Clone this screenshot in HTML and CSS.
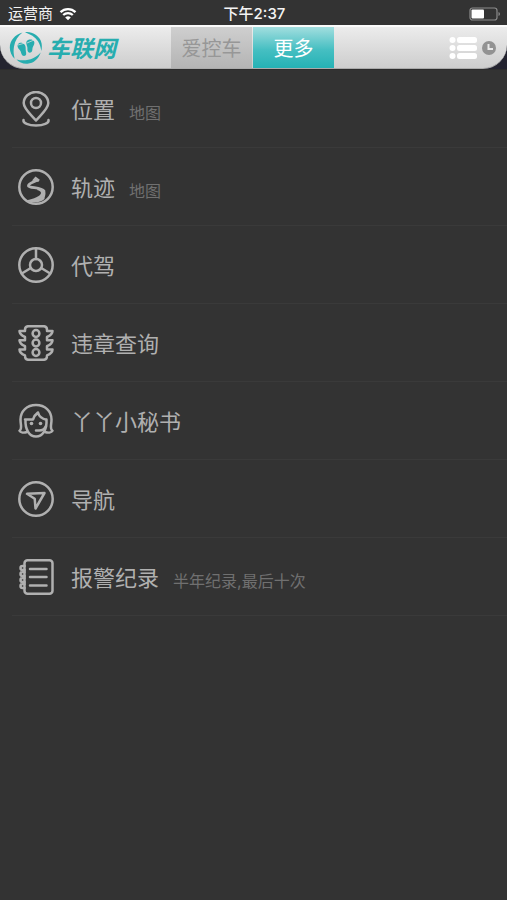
FILE: index.html
```html
<!DOCTYPE html>
<html lang="zh-CN">
<head>
<meta charset="utf-8">
<meta name="viewport" content="width=device-width, initial-scale=1">
<title>车联网</title>
<link rel="stylesheet" href="styles.css">
</head>
<body>
<div class="status">
  <div class="carrier">
    <span>运营商</span>
    <svg width="18" height="14" viewBox="0 0 18 14" aria-hidden="true">
      <path d="M1.500 5.200a10.800 10.800 0 0 1 15 0M4.200 8a7 7 0 0 1 9.600 0" fill="none" stroke="#fff" stroke-width="2.300"/>
      <path d="M9 13.300 6.200 10.500a4 4 0 0 1 5.600 0z" fill="#fff"/>
    </svg>
  </div>
  <time class="clock">下午2:37</time>
  <svg class="battery" width="32" height="14" viewBox="0 0 32 14" aria-hidden="true">
    <rect x="1" y="1" width="27" height="12" rx="2.500" fill="none" stroke="#8b8b8b" stroke-width="1.200"/>
    <path d="M29.500 5v4q1.500-.5 1.500-2t-1.500-2z" fill="#8b8b8b"/>
    <rect x="2.500" y="2.500" width="12.500" height="9" rx="1" fill="#fff"/>
  </svg>
</div>

<div class="header-wrap">
<header class="header">
  <a class="brand" href="#">
    <svg width="34" height="34" viewBox="0 0 34 34" aria-hidden="true">
      <g fill="#27adaf">
        <path d="M13.500 1.500C6 3.500.8 9.500.8 16.500c0 4.500 2 8.500 4.800 11.200C4.500 23 4.300 19.500 5 15.500 6 9.500 9 5 13.500 1.500z"/>
        <path d="M16 1.200c7-.9 13 2.800 15.800 8.600 1.500 3.600 1.200 7.500.5 10.200-.6-4-1.500-7-3.300-9.800C26 5.600 21.500 3.300 16 1.200z"/>
        <path d="M31.700 21.500c-2.200 6.500-7 10.700-13.200 11.200-4.500.3-8.500-1.300-11-4.200 6 1.500 11.500 1 16.500-1.300 3.200-1.500 5.500-3.400 7.700-5.700z"/>
        <path d="M9 13.200c1.500-2 4.600-1.800 6.500.3 1.300 1.500 1.200 3.300 1.200 5.200 0 1.900 1.200 4.200 0 5.600-1.300 1.400-3.600.8-4.200-1.200-.5-1.800-.7-3-2-4.400-1.600-1.600-2.700-3.600-1.500-5.500z"/>
        <path d="M18 9.800c2-2.100 5.800-1.800 7 .4.900 1.800.1 3.600-.9 5.200-1 1.700-.5 3.200-1 4.700-.7 1.800-3 2.200-4.100.7-1-1.400-.3-3-.7-4.700-.4-1.900-1.800-4.600-.3-6.300z"/>
      </g>
      <path d="m9 14 7-2M18 12l7-3" fill="none" stroke="#e4e4e4" stroke-width=".7"/>
    </svg>
    <span class="brand-name">车联网</span>
  </a>
  <nav class="tabs">
    <button type="button" class="tab">爱控车</button>
    <button type="button" class="tab tab-active">更多</button>
  </nav>
  <div class="tools">
    <button type="button" class="tool" aria-label="列表">
      <svg width="28" height="24" viewBox="0 0 28 24" fill="#fff">
        <circle cx="3.500" cy="4" r="3"/><circle cx="3.500" cy="12" r="3"/><circle cx="3.500" cy="20" r="3"/>
        <rect x="8" y="1" width="20" height="6" rx="2.500"/><rect x="8" y="9" width="20" height="6" rx="2.500"/><rect x="8" y="17" width="20" height="6" rx="2.500"/>
      </svg>
    </button>
    <button type="button" class="tool" aria-label="时间">
      <svg width="14" height="14" viewBox="0 0 14 14">
        <circle cx="7" cy="7" r="7" fill="#929292"/>
        <path d="M6.500 3v5H11" fill="none" stroke="#e8e8e8" stroke-width="2"/>
      </svg>
    </button>
  </div>
</header>
</div>

<main>
<ul class="menu">
  <li><a class="row" href="#">
    <svg class="icon" viewBox="0 0 36 36" aria-hidden="true">
      <path d="M18 29.500C13.500 24 5.700 18 5.700 12a12.300 11 0 0 1 24.600 0C30.300 18 22.500 24 18 29.500z"/>
      <circle cx="18" cy="12" r="5"/>
      <path d="M5.500 29c-.8 3 5 5.500 12.500 5.500S31.300 32 30.500 29"/>
    </svg>
    <span class="title">位置</span><span class="note">地图</span></a></li>
  <li><a class="row" href="#">
    <svg class="icon" viewBox="0 0 36 36" aria-hidden="true">
      <circle cx="18" cy="18" r="16.700"/>
      <path d="M18.500 11.500C14 13.500 10 15.300 10.500 17c.6 2 13 1.500 15.500 5" stroke-width="2.800"/>
      <path class="solid" d="m17.500 7.500 4.300 3.200-1.500 2.300-6.300-1.500z"/>
      <path class="solid" d="M20 19.500c4.500.3 7.500 1.700 7.500 4.500 0 2.500-1 4-1 6-4 4-13 4.500-18 1.200 7-1.200 14.500-4.200 14.500-7.200 0-1.500-1.500-2.500-4-3z"/>
    </svg>
    <span class="title">轨迹</span><span class="note">地图</span></a></li>
  <li><a class="row" href="#">
    <svg class="icon" viewBox="0 0 36 36" aria-hidden="true">
      <circle cx="18" cy="18" r="16.700"/><circle cx="18" cy="18" r="6"/>
      <path d="M18 1.500V12M12.800 21 3.800 26.500M23.200 21l9 5.500"/>
    </svg>
    <span class="title">代驾</span></a></li>
  <li><a class="row" href="#">
    <svg class="icon" viewBox="0 0 36 36" aria-hidden="true">
      <path d="M10.500 1.200h15q3.500 0 3.500 3.500V6h5.500c0 3-2 4.500-5.500 6v3.200h5.500c0 3-2 4.500-5.500 6v3.200h5.500c0 3-2 4.500-5.500 6v.4q0 4-3.500 4h-15q-3.500 0-3.500-4v-.4c-3.500-1.500-5.500-3-5.500-6H7v-3.200c-3.500-1.500-5.500-3-5.500-6H7V12C3.500 10.500 1.500 9 1.500 6H7V4.700q0-3.500 3.500-3.500z"/>
      <circle cx="18" cy="8.500" r="3.400"/><circle cx="18" cy="18" r="3.400"/><circle cx="18" cy="27.500" r="3.400"/>
    </svg>
    <span class="title">违章查询</span></a></li>
  <li><a class="row" href="#">
    <svg class="icon" viewBox="0 0 36 36" aria-hidden="true">
      <path d="M9 29c-3 1-6.500.8-7.500-1.200C4.500 26 2.500 22 2.500 16.500 2.500 8 9 2 18 2s15.500 6 15.500 14.500c0 5.500-2 9.500 1 11.300-1 2-4.500 2.200-7.500 1.200"/>
      <path d="M7.500 16.500C7 26 11 33.500 18 33.500S29 26 28.500 16.500M7 16.500h8l1.500-3.500 3.500-3.500c1 4 4 6.300 8.500 7.300"/>
      <circle class="solid" cx="13.500" cy="20.500" r="1.800"/><circle class="solid" cx="22.500" cy="20.500" r="1.800"/>
      <path d="M18 27.500h2.500c4 .3 6-1.500 7.500-4.500"/>
    </svg>
    <span class="title">丫丫小秘书</span></a></li>
  <li><a class="row" href="#">
    <svg class="icon" viewBox="0 0 36 36" aria-hidden="true">
      <circle cx="18" cy="18" r="16.700"/>
      <path d="M9 12.800 26.500 12 17.500 27.500l-.8-9.800z"/>
    </svg>
    <span class="title">导航</span></a></li>
  <li><a class="row" href="#">
    <svg class="icon" viewBox="0 0 36 36" aria-hidden="true">
      <rect x="6.500" y="1.300" width="28" height="33.400" rx="3"/>
      <path d="M12 10h16.500M12 18h16.500M12 26.500h16.500"/>
      <path d="M6.500 7h-2a2 2 0 0 0 0 4h2M6.500 13h-2a2 2 0 0 0 0 4h2M6.500 19h-2a2 2 0 0 0 0 4h2M6.500 25h-2a2 2 0 0 0 0 4h2"/>
    </svg>
    <span class="title">报警纪录</span><span class="note">半年纪录,最后十次</span></a></li>
</ul>
</main>
</body>
</html>
```
FILE: styles.css
```css
* {
  box-sizing: border-box;
}

body {
  margin: 0;
  min-height: 100vh;
  background: #333;
  color: #b0b0b0;
  font-family: Inter, "Noto Sans CJK SC", sans-serif;
}

button {
  padding: 0;
  border: 0;
  background: none;
  font: inherit;
}

a {
  color: inherit;
  text-decoration: none;
}

svg {
  display: block;
  flex: none;
}

.status {
  display: grid;
  grid-template-columns: 1fr auto 1fr;
  align-items: center;
  height: 25px;
  padding: 2px 6px 0 8px;
  color: #f4f4f4;
  font-size: 15px;
  line-height: 22px;
}

.carrier {
  display: flex;
  align-items: center;
  gap: 6px;
}

.clock {
  font-weight: 500;
}

.battery {
  justify-self: end;
}

.header-wrap {
  background: #23232f;
  border-bottom: 1px solid #2c2c2c;
}

.header {
  display: grid;
  grid-template-columns: 1fr auto 1fr;
  align-items: center;
  height: 44px;
  padding: 0 11px 0 9px;
  border-top: 2px solid #fafafa;
  border-bottom: 1px solid #aaa;
  border-radius: 0 0 24px 24px;
  background: linear-gradient(#ececec, #cdcdcd);
}

.brand {
  display: flex;
  align-items: center;
  gap: 4px;
}

.brand-name {
  padding-top: 2px;
  color: #27adaf;
  font-size: 23px;
  font-style: italic;
  font-weight: 700;
  line-height: 28px;
}

.tabs {
  display: flex;
  align-self: stretch;
  gap: 1px;
}

.tab {
  width: 81px;
  background: linear-gradient(#cfcfcf, #b4b4b4);
  color: #979797;
  font-size: 20px;
}

.tab-active {
  background: linear-gradient(#a2dedf, #46bfc2 55%, #25b2b5);
  color: #fff;
}

.tools {
  display: flex;
  align-items: center;
  justify-content: flex-end;
  gap: 5px;
}

.menu {
  margin: 0;
  padding: 0 0 0 12px;
  list-style: none;
}

.row {
  display: flex;
  align-items: center;
  height: 78px;
  padding-left: 6px;
  border-bottom: 1px solid #3a3a3a;
}

.icon {
  width: 36px;
  height: 36px;
  fill: none;
  stroke: #b0b0b0;
  stroke-width: 2.5;
  stroke-linecap: round;
  stroke-linejoin: round;
}

.icon .solid {
  fill: #b0b0b0;
  stroke: none;
}

.title {
  margin-left: 17px;
  padding-top: 2px;
  font-size: 22px;
  line-height: 32px;
}

.note {
  margin-left: 14px;
  padding-top: 8px;
  color: #707070;
  font-size: 16px;
  line-height: 24px;
}
```
